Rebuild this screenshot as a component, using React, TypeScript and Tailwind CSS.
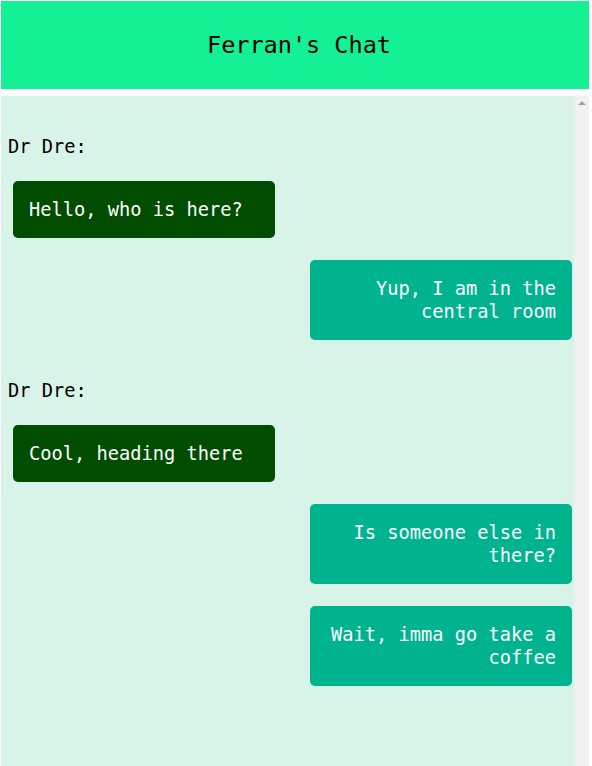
import React from "react";

type Msg = { from: "them" | "me"; text: string; label?: string };

const msgs: Msg[] = [
  { from: "them", text: "Hello, who is here?", label: "Dr Dre:" },
  { from: "me", text: "Yup, I am in the central room" },
  { from: "them", text: "Cool, heading there", label: "Dr Dre:" },
  { from: "me", text: "Is someone else in there?" },
  { from: "me", text: "Wait, imma go take a coffee" },
];

export default function App() {
  return (
    <div
      className="w-[592px] h-[766px] bg-white pl-px pt-px overflow-hidden"
      style={{ fontFamily: '"DejaVu Sans Mono", "Liberation Mono", monospace' }}
    >
      <div className="w-[588px] h-[88px] bg-[#14f194] flex items-center justify-center pl-[8px]">
        <h2 className="text-[23.5px] leading-[28px] text-black">Ferran's Chat</h2>
      </div>
      <div className="mt-[7px] w-[588px] h-[670px] flex bg-[#d8f3e8]">
        <div className="flex-1 flex flex-col">
          {msgs.map((m, i) => {
            const prev = msgs[i - 1];
            return (
              <React.Fragment key={i}>
                {m.label && (
                  <div
                    className={`pl-[7px] text-[18.7px] leading-[23px] text-black ${
                      i === 0 ? "mt-[39px]" : "mt-[39px]"
                    }`}
                  >
                    {m.label}
                  </div>
                )}
                {m.from === "them" ? (
                  <div
                    className={`ml-[12px] w-[262px] rounded-[5px] bg-[#004d00] text-white px-[16px] py-[17px] text-[18.7px] leading-[23px] ${
                      m.label ? "mt-[23px]" : "mt-[22px]"
                    }`}
                  >
                    {m.text}
                  </div>
                ) : (
                  <div
                    className={`self-end mr-[2px] w-[262px] rounded-[5px] bg-[#00b38f] text-white px-[16px] py-[17px] text-right text-[18.7px] leading-[23px] ${
                      prev ? "mt-[22px]" : ""
                    }`}
                  >
                    {m.text}
                  </div>
                )}
              </React.Fragment>
            );
          })}
        </div>
        <div className="w-[15px] bg-[#f1f1f1] flex justify-center pt-[5px]">
          <div className="w-0 h-0 border-l-[4px] border-r-[4px] border-b-[4px] border-l-transparent border-r-transparent border-b-[#a3a3a3]" />
        </div>
      </div>
    </div>
  );
}
